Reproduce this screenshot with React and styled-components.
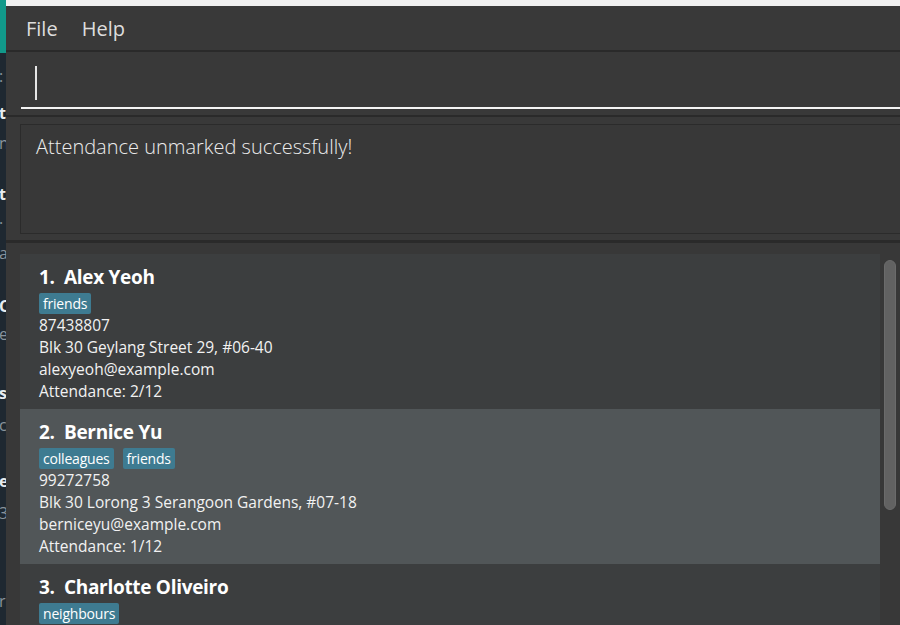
import React from "react";
import styled, { createGlobalStyle } from "styled-components";

const GlobalStyle = createGlobalStyle`
  html, body {
    margin: 0;
    padding: 0;
    background: #f0f0f0;
    overflow: hidden;
  }
  * {
    box-sizing: border-box;
  }
`;

const Page = styled.div`
  display: flex;
  width: 900px;
  height: 625px;
  overflow: hidden;
  font-family: "Open Sans", "Noto Sans", sans-serif;
`;

// the window behind, only a sliver of it shows on the left
const BackWindow = styled.div`
  width: 6px;
  display: flex;
  flex-direction: column;
  overflow: hidden;
`;

const BackHeader = styled.div`
  height: 53px;
  background: #11998a;
`;

const BackBody = styled.div`
  flex: 1;
  background: #1e2831;
  display: flex;
  flex-direction: column;
`;

const Fragment = styled.div`
  margin-top: ${(p) => p.$gap}px;
  height: 20px;
  line-height: 20px;
  font-size: 16px;
  white-space: nowrap;
  margin-left: -1px;
  font-weight: ${(p) => (p.$bold ? 700 : 400)};
  color: ${(p) => (p.$bold ? "#e8ecef" : "#8a949c")};
`;

const AppWindow = styled.div`
  flex: 1;
  display: flex;
  flex-direction: column;
  min-width: 0;
`;

const TopBand = styled.div`
  height: 6px;
  background: #f0f0f0;
`;

const MenuBar = styled.div`
  height: 44px;
  background: #393939;
  display: flex;
  align-items: center;
  gap: 24px;
  padding-left: 20px;
`;

const MenuItem = styled.span`
  font-size: 20px;
  color: #dedede;
  font-weight: 400;
`;

const Divider = styled.div`
  height: ${(p) => p.$size}px;
  background: #2a2a2a;
`;

const CommandPane = styled.div`
  height: 63px;
  background: #393939;
  padding: 10px 0 0 15px;
`;

const CommandField = styled.div`
  height: 47px;
  border-bottom: 2px solid #f4f4f4;
  display: flex;
  align-items: flex-start;
  padding: 4px 0 0 14px;
`;

const Caret = styled.span`
  width: 2px;
  height: 34px;
  background: #e6e6e6;
`;

const ResultPane = styled.div`
  height: 123px;
  background: #393939;
  padding: 7px 0 6px 14px;
`;

const ResultBox = styled.div`
  height: 110px;
  border: 1px solid #2b2b2b;
  border-right: none;
  background: #383838;
  padding: 9px 15px;
  font-size: 20px;
  line-height: 26px;
  font-weight: 300;
  color: #ececec;
`;

const ListPane = styled.div`
  flex: 1;
  background: #383838;
  display: flex;
  padding: 11px 4px 0 14px;
  overflow: hidden;
`;

const CardList = styled.div`
  width: 860px;
  display: flex;
  flex-direction: column;
`;

const Card = styled.div`
  flex: none;
  height: 155px;
  padding: 11px 19px 8px;
  background: ${(p) => (p.$odd ? "#515658" : "#3c3e3f")};
  color: #f2f2f2;
`;

const NameLine = styled.div`
  font-size: 19px;
  line-height: 24px;
  font-weight: 700;
  white-space: pre;
  color: #ffffff;
  letter-spacing: -0.3px;
`;

const TagRow = styled.div`
  display: flex;
  gap: 9px;
  margin-top: 4px;
`;

const Tag = styled.span`
  height: 21px;
  line-height: 21px;
  padding: 0 4px;
  font-size: 14px;
  color: #ffffff;
  background: #3e7b91;
  border-radius: 2px;
  letter-spacing: -0.2px;
`;

const Detail = styled.div`
  font-size: 15.5px;
  line-height: 22px;
  color: #f2f2f2;
`;

const ScrollTrack = styled.div`
  width: 12px;
  margin-left: 4px;
  padding-top: 6px;
`;

const ScrollThumb = styled.div`
  height: 250px;
  background: #626262;
  border: 1px solid #6b6b6b;
  border-radius: 6px;
`;

const fragments = [
  { gap: 13, text: ":", bold: false },
  { gap: 17, text: "t", bold: true },
  { gap: 10, text: "n,", bold: false },
  { gap: 31, text: "t", bold: true },
  { gap: 9, text: "·", bold: false },
  { gap: 10, text: "a", bold: false },
  { gap: 33, text: "C", bold: true },
  { gap: 8, text: "e", bold: false },
  { gap: 39, text: "s", bold: true },
  { gap: 12, text: "c", bold: false },
  { gap: 36, text: "el", bold: true },
  { gap: 12, text: "3", bold: false },
  { gap: 68, text: "r", bold: false },
];

const persons = [
  {
    name: "Alex Yeoh",
    tags: ["friends"],
    phone: "87438807",
    address: "Blk 30 Geylang Street 29, #06-40",
    email: "alexyeoh@example.com",
    attendance: "2/12",
  },
  {
    name: "Bernice Yu",
    tags: ["colleagues", "friends"],
    phone: "99272758",
    address: "Blk 30 Lorong 3 Serangoon Gardens, #07-18",
    email: "berniceyu@example.com",
    attendance: "1/12",
  },
  {
    name: "Charlotte Oliveiro",
    tags: ["neighbours"],
    phone: "93210283",
    address: "Blk 11 Ang Mo Kio Street 74, #11-04",
    email: "charlotte@example.com",
    attendance: "0/12",
  },
];

export default function App() {
  return (
    <Page>
      <GlobalStyle />
      <BackWindow>
        <BackHeader />
        <BackBody>
          {fragments.map((f, i) => (
            <Fragment key={i} $gap={f.gap} $bold={f.bold}>
              {f.text}
            </Fragment>
          ))}
        </BackBody>
      </BackWindow>

      <AppWindow>
        <TopBand />
        <MenuBar>
          <MenuItem>File</MenuItem>
          <MenuItem>Help</MenuItem>
        </MenuBar>
        <Divider $size={2} />
        <CommandPane>
          <CommandField>
            <Caret />
          </CommandField>
        </CommandPane>
        <Divider $size={2} />
        <ResultPane>
          <ResultBox>Attendance unmarked successfully!</ResultBox>
        </ResultPane>
        <Divider $size={3} />
        <ListPane>
          <CardList>
            {persons.map((p, i) => (
              <Card key={p.name} $odd={i % 2 === 1}>
                <NameLine>{`${i + 1}.  ${p.name}`}</NameLine>
                <TagRow>
                  {p.tags.map((t) => (
                    <Tag key={t}>{t}</Tag>
                  ))}
                </TagRow>
                <Detail>{p.phone}</Detail>
                <Detail>{p.address}</Detail>
                <Detail>{p.email}</Detail>
                <Detail>Attendance: {p.attendance}</Detail>
              </Card>
            ))}
          </CardList>
          <ScrollTrack>
            <ScrollThumb />
          </ScrollTrack>
        </ListPane>
      </AppWindow>
    </Page>
  );
}
